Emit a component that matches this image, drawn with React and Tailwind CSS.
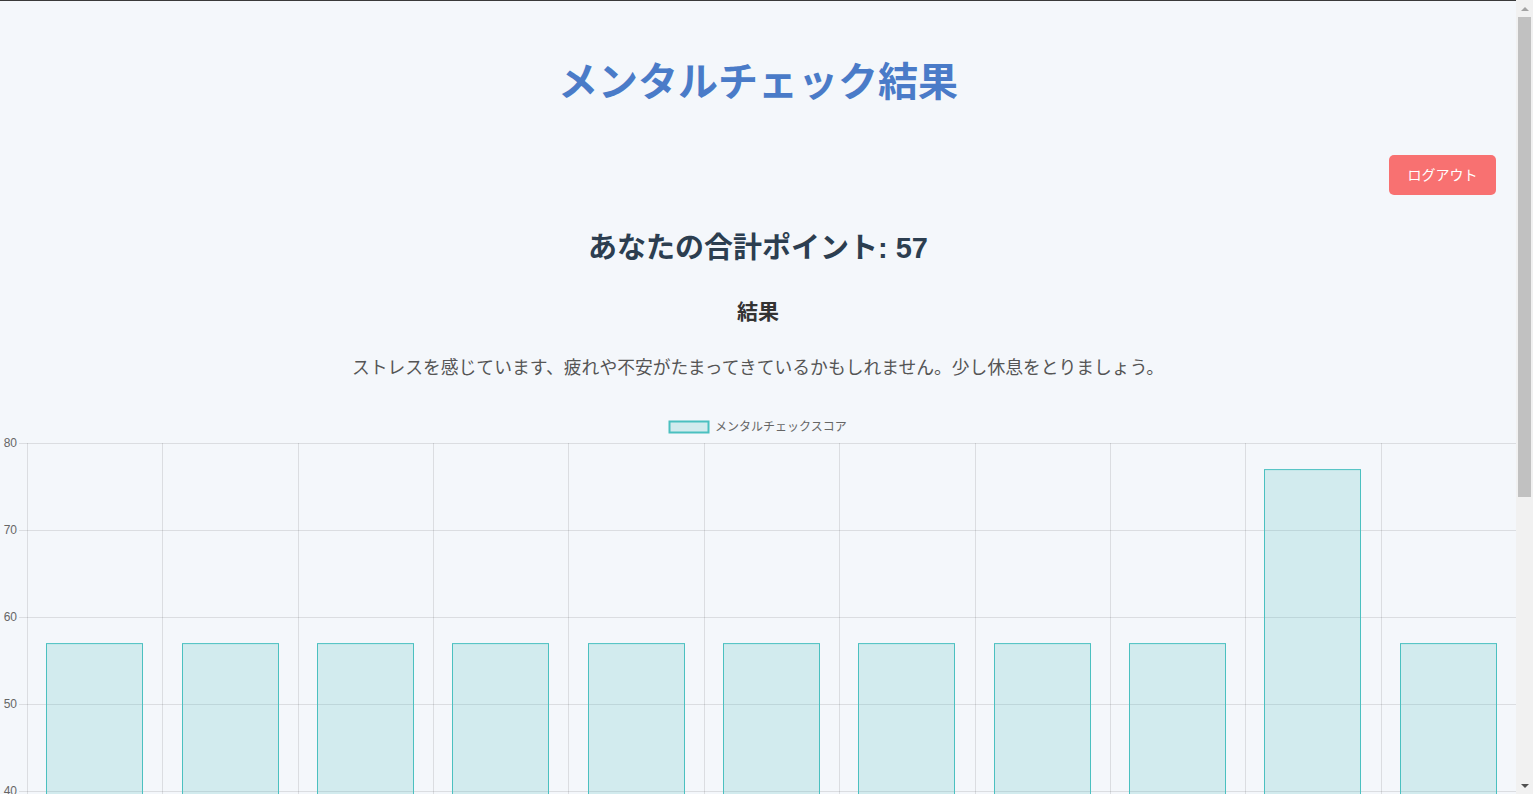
const scores = [57, 57, 57, 57, 57, 57, 57, 57, 57, 77, 57];

function ScoreChart() {
  const left = 27;
  const right = 1516;
  const top = 33;
  const perTen = 87;
  const max = 80;
  const colW = (right - left) / scores.length;
  const y = (v) => top + ((max - v) / 10) * perTen;
  const ticks = [80, 70, 60, 50, 40, 30, 20, 10, 0];
  const bottom = y(0);

  return (
    <svg width="1516" height="790" viewBox="0 0 1516 790" className="block">
      {/* legend */}
      <rect x="669.5" y="11.5" width="39" height="11" fill="rgba(75,192,192,0.2)" stroke="rgb(75,192,192)" strokeWidth="2" />
      <text x="715" y="20.5" fontSize="12" fill="#666" fontFamily="'Liberation Sans','Noto Sans CJK JP',sans-serif">
        メンタルチェックスコア
      </text>

      {/* horizontal grid + y labels */}
      {ticks.map((t) => (
        <g key={t}>
          <line x1="19" x2={right} y1={y(t) + 0.5} y2={y(t) + 0.5} stroke="rgba(0,0,0,0.1)" />
          <text x="17" y={y(t) + 4} fontSize="12" textAnchor="end" fill="#666" fontFamily="'Liberation Sans',sans-serif">
            {t}
          </text>
        </g>
      ))}

      {/* vertical grid */}
      {Array.from({ length: scores.length + 1 }).map((_, i) => {
        const x = Math.round(left + i * colW) + 0.5;
        return <line key={i} x1={x} x2={x} y1={top} y2={bottom + 8} stroke="rgba(0,0,0,0.1)" />;
      })}

      {/* bars */}
      {scores.map((s, i) => {
        const cx = left + (i + 0.5) * colW;
        const w = 97;
        return (
          <rect
            key={i}
            x={Math.round(cx - w / 2) + 0.5}
            y={y(s) + 0.5}
            width={w - 1}
            height={bottom - y(s)}
            fill="rgba(75,192,192,0.2)"
            stroke="rgb(75,192,192)"
            strokeWidth="1"
          />
        );
      })}
    </svg>
  );
}

function Scrollbar() {
  return (
    <div className="fixed right-0 top-0 flex h-screen w-[17px] flex-col bg-[#f1f1f1]">
      <div className="flex h-[17px] items-center justify-center">
        <div className="h-0 w-0 border-x-[4px] border-b-[4px] border-x-transparent border-b-[#a3a3a3]" />
      </div>
      <div className="mx-[2px] h-[480px] bg-[#c1c1c1]" />
      <div className="flex-1" />
      <div className="flex h-[17px] items-center justify-center">
        <div className="h-0 w-0 border-x-[4px] border-t-[4px] border-x-transparent border-t-[#505050]" />
      </div>
    </div>
  );
}

export default function App() {
  return (
    <div
      className="min-h-screen bg-[#f4f7fb] border-t border-[#3a3a3a] pr-[17px]"
      style={{ fontFamily: "'Liberation Sans', 'Noto Sans CJK JP', sans-serif" }}
    >
      <h1 className="pt-[57px] text-center text-[40px] leading-[48px] font-bold text-[#4a7bc8]">
        メンタルチェック結果
      </h1>

      <div className="mt-[49px] flex justify-end pr-[20px]">
        <button className="h-[40px] w-[107px] rounded-[5px] bg-[#f87171] text-[14px] text-white">
          ログアウト
        </button>
      </div>

      <h2 className="mt-[35px] text-center text-[29px] leading-[36px] font-bold text-[#2c3e50]">
        あなたの合計ポイント: 57
      </h2>

      <h3 className="mt-[32px] text-center text-[21px] leading-[28px] font-bold text-[#333]">結果</h3>

      <p className="mt-[29px] text-center text-[17.8px] leading-[26px] text-[#555]">
        ストレスを感じています、疲れや不安がたまってきているかもしれません。少し休息をとりましょう。
      </p>

      <div className="mt-[29px]">
        <ScoreChart />
      </div>

      <Scrollbar />
    </div>
  );
}
